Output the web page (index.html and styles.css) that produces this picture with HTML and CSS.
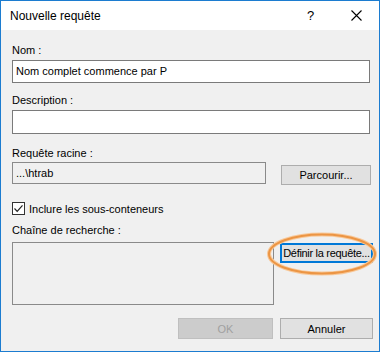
FILE: index.html
```html
<!DOCTYPE html>
<html lang="fr">
<head>
    <meta charset="UTF-8">
    <title>Nouvelle requête</title>
    <link rel="stylesheet" href="styles.css">
</head>
<body>
    <div class="window">
        <div class="titlebar">
            <span class="title">Nouvelle requête</span>
            <span class="help">?</span>
            <span class="close">
                <svg width="11" height="11" viewBox="0 0 11 11"><path d="M0.5 0.5 L10.5 10.5 M10.5 0.5 L0.5 10.5" stroke="#000" stroke-width="1.1" fill="none"/></svg>
            </span>
        </div>

        <div class="content">
            <div class="label first">Nom :</div>
            <div class="textbox wide">Nom complet commence par P</div>

            <div class="label gap11">Description :</div>
            <div class="textbox wide tall"></div>

            <div class="label gap13">Requête racine :</div>
            <div class="row root">
                <div class="textbox readonly rootbox">...\htrab</div>
                <button class="btn browse">Parcourir...</button>
            </div>

            <label class="check">
                <span class="box">
                    <svg width="11" height="11" viewBox="0 0 11 11"><path d="M1.5 5.5 L4.2 8.3 L9.5 2.3" stroke="#222" stroke-width="1.2" fill="none"/></svg>
                </span>
                Inclure les sous-conteneurs
            </label>

            <div class="label gap9">Chaîne de recherche :</div>
            <div class="row search">
                <div class="textbox readonly multiline"></div>
                <button class="btn define">Définir la requête...</button>
            </div>

            <div class="footer">
                <button class="btn ok" disabled>OK</button>
                <button class="btn cancel">Annuler</button>
            </div>
        </div>

        <!-- highlight drawn over the dialog -->
        <svg class="highlight" width="120" height="50" viewBox="0 0 120 50">
            <ellipse cx="55" cy="24" rx="53" ry="19.5" fill="none" stroke="#f8c99a" stroke-width="4"/>
            <ellipse cx="55" cy="24" rx="53" ry="19.5" fill="none" stroke="#ec9544" stroke-width="2"/>
        </svg>
    </div>
</body>
</html>
```

FILE: styles.css
```css
body { margin: 0; font-family: "Liberation Sans", Arial, sans-serif; font-size: 11px; color: #000; }
.window { width: 380px; height: 352px; box-sizing: border-box; border: 1px solid #1c7cd0; background-color: #f0f0f0; position: relative; overflow: hidden; }
.titlebar { height: 29px; background-color: #fff; display: flex; align-items: center; padding-left: 9px; font-size: 12px; }
.title { flex: 1; }
.help { width: 14px; font-size: 13px; margin-right: 30px; }
.close { width: 11px; height: 11px; margin-right: 17px; display: flex; }
.content { padding: 0 6px 0 11px; }
.label { height: 13px; line-height: 13px; margin-bottom: 3px; }
.label.first { margin-top: 14px; }
.gap11 { margin-top: 11px; }
.gap13 { margin-top: 13px; }
.gap9 { margin-top: 9px; margin-bottom: 5px; }
.textbox { box-sizing: border-box; height: 23px; border: 1px solid #7a7a7a; background-color: #fff; padding: 4px 3px 0 3px; line-height: 13px; white-space: nowrap; }
.wide { width: 358px; }
.tall { height: 24px; }
.readonly { background-color: #f0f0f0; border-color: #8a8a8a; }
.row { display: flex; align-items: flex-start; }
.root { margin-top: -1px; }
.rootbox { width: 254px; height: 22px; }
.btn { box-sizing: border-box; height: 21px; padding: 0; font-family: inherit; font-size: 11px; color: #000; background-color: #e1e1e1; border: 1px solid #adadad; white-space: nowrap; }
.browse { width: 90px; height: 20px; margin: 3px 0 0 15px; }
.check { display: flex; align-items: center; height: 13px; margin-top: 17px; }
.box { box-sizing: border-box; width: 13px; height: 13px; border: 1px solid #333; background-color: #fff; margin-right: 4px; display: flex; align-items: center; justify-content: center; }
.multiline { width: 262px; height: 63px; }
.define { width: 93px; height: 20px; margin: 1px 0 0 6px; border: 2px solid #0078d7; letter-spacing: -0.3px; overflow: hidden; }
.footer { display: flex; justify-content: flex-end; gap: 7px; margin-top: 13px; }
.ok { width: 95px; background-color: #cccccc; border-color: #bfbfbf; color: #a0a0a0; }
.cancel { width: 93px; }
.highlight { position: absolute; left: 266px; top: 229px; }
```
